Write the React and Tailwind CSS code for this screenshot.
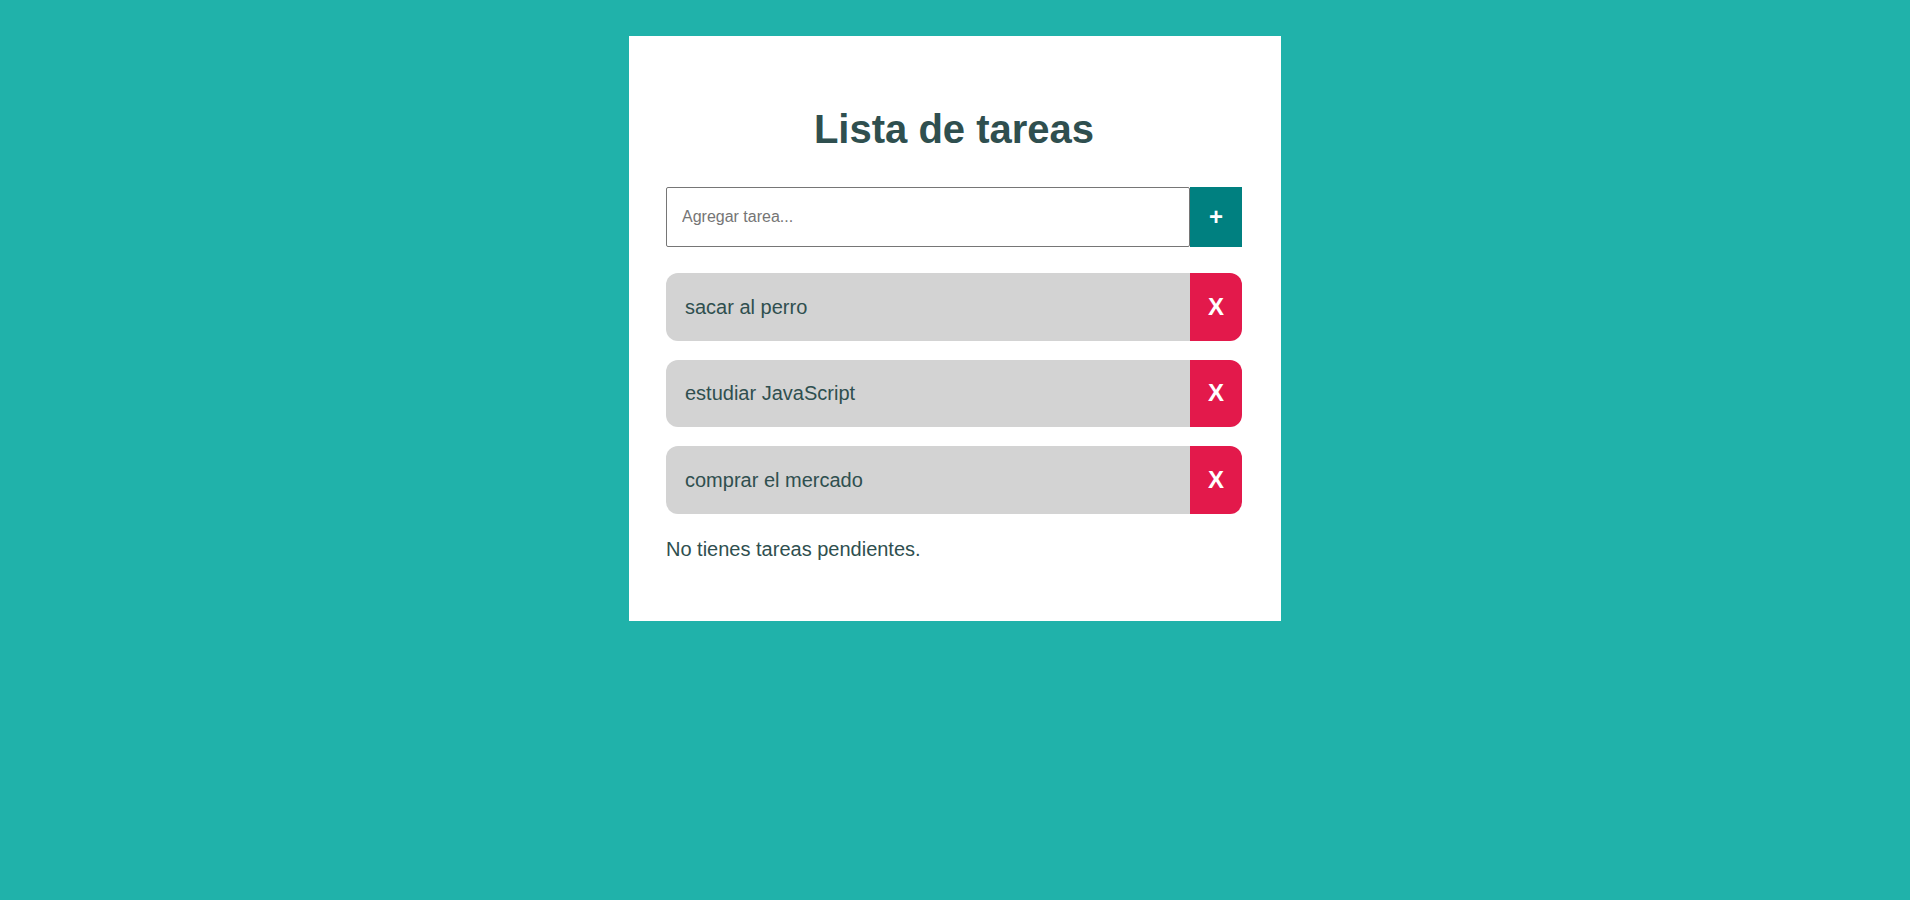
import React, { useState } from 'react'

const App = () => {
  const [tasks, setTasks] = useState([
    { id: 1, text: 'sacar al perro' },
    { id: 2, text: 'estudiar JavaScript' },
    { id: 3, text: 'comprar el mercado' },
  ])
  const [newTask, setNewTask] = useState('')

  const handleAdd = () => {
    if (!newTask.trim()) return
    setTasks([...tasks, { id: Date.now(), text: newTask.trim() }])
    setNewTask('')
  }

  const handleDelete = (id) => {
    setTasks(tasks.filter(t => t.id !== id))
  }

  return (
    <div
      className="min-h-screen bg-[#20b2aa] pt-[36px]"
      style={{ fontFamily: '"Liberation Sans", Arial, sans-serif' }}
    >
      <div className="mx-auto w-[652px] bg-white pt-[70px] pb-[60px] pl-[37px] pr-[39px] text-[#2f4f4f]">
        <h1 className="text-center text-[40px] leading-[46px] font-bold text-[#2f4f4f]">
          Lista de tareas
        </h1>

        {/* Add task */}
        <div className="mt-[35px] flex h-[60px]">
          <input
            type="text"
            value={newTask}
            onChange={(e) => setNewTask(e.target.value)}
            onKeyDown={(e) => e.key === 'Enter' && handleAdd()}
            placeholder="Agregar tarea..."
            className="h-full min-w-0 flex-1 rounded-[2px] border border-[#767676] px-[15px] text-[16px] text-black placeholder:text-[#757575] focus:outline-none"
          />
          <button
            onClick={handleAdd}
            className="h-full w-[52px] shrink-0 bg-[#008080] text-[24px] font-bold text-white"
          >
            +
          </button>
        </div>

        {/* List */}
        <div className="mt-[26px] flex flex-col gap-[19px]">
          {tasks.map((task) => (
            <div key={task.id} className="flex h-[67.5px] overflow-hidden rounded-[12px]">
              <div className="flex flex-1 items-center bg-[#d3d3d3] pl-[19px] text-[20px] text-[#2f4f4f]">
                {task.text}
              </div>
              <button
                onClick={() => handleDelete(task.id)}
                className="w-[52px] shrink-0 bg-[#e3194b] text-[24px] font-bold text-white"
              >
                X
              </button>
            </div>
          ))}
        </div>

        <p className="mt-[24px] text-[20px] leading-[23px] text-[#2f4f4f]">
          No tienes tareas pendientes.
        </p>
      </div>
    </div>
  )
}

export default App
